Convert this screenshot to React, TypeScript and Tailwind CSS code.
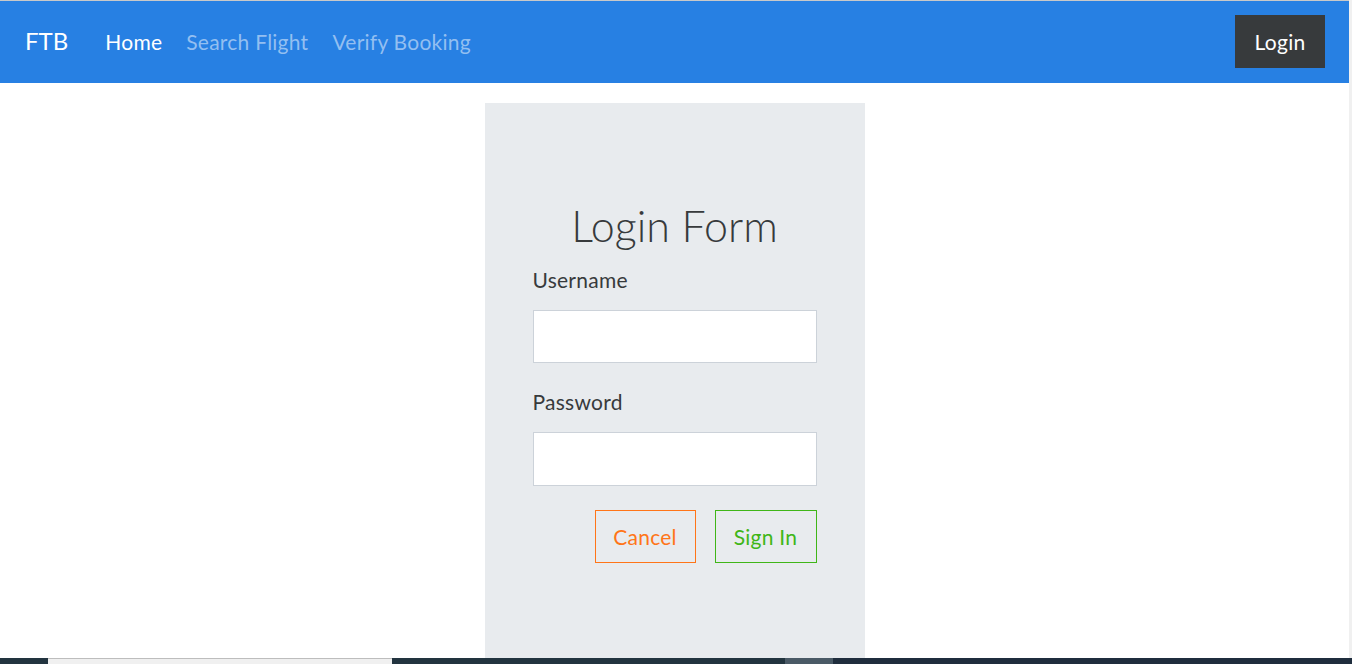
const App = () => {
  return (
    <div className="h-screen w-full flex flex-col bg-white overflow-hidden" style={{ fontFamily: 'Lato, "Open Sans", sans-serif' }}>
      <div className="flex-1 flex min-h-0">
        <div className="flex-1 flex flex-col min-w-0">
          {/* top edge */}
          <div className="h-px bg-[#c9c9c9]"></div>

          {/* Navbar */}
          <nav className="h-[82px] bg-[#2780e3] flex items-center pl-[25px] pr-[24px]">
            <span className="text-white text-[24px] leading-none -mt-[2px]">FTB</span>
            <div className="flex items-center gap-[24px] ml-[37px] text-[21px] tracking-[0.25px] leading-none -mt-[2px]">
              <a className="text-white">Home</a>
              <a className="text-[#93bff1]">Search Flight</a>
              <a className="text-[#93bff1]">Verify Booking</a>
            </div>
            <button className="ml-auto w-[90px] h-[53px] -mt-[2px] bg-[#373a3c] text-white text-[21px] tracking-[0.25px] leading-none">
              Login
            </button>
          </nav>

          {/* Login panel */}
          <div className="flex-1 flex justify-center pt-5 min-h-0">
            <div className="w-[380px] bg-[#e8ebee] px-12 pt-[100px]">
              <h1 className="text-[43px] font-light text-[#373a3c] text-center leading-[46px]">Login Form</h1>
              <label className="block mt-[17px] text-[21px] tracking-[0.25px] text-[#373a3c] leading-[28px]">Username</label>
              <input type="text" className="block mt-[16px] w-full h-[53px] bg-white border border-[#ccd2d9] outline-none" />
              <label className="block mt-[25px] text-[21px] tracking-[0.25px] text-[#373a3c] leading-[28px]">Password</label>
              <input type="password" className="block mt-[16px] w-full h-[54px] bg-white border border-[#ccd2d9] outline-none" />
              <div className="flex justify-end gap-[19px] mt-[24px]">
                <button className="w-[101px] h-[53px] border border-[#ff7518] text-[#ff7518] text-[21px] tracking-[0.25px] leading-none">Cancel</button>
                <button className="w-[102px] h-[53px] border border-[#3fb618] text-[#3fb618] text-[21px] tracking-[0.25px] leading-none">Sign In</button>
              </div>
            </div>
          </div>
        </div>
        <div className="w-[3px] bg-[#f0f0f0]"></div>
      </div>

      {/* taskbar strip */}
      <div className="h-[6px] flex bg-[#22343f]">
        <div className="w-[48px]"></div>
        <div className="w-[344px] bg-[#f0f0f0] border-t border-[#bdbdbd]"></div>
        <div className="w-[393px]"></div>
        <div className="w-[48px] bg-[#4a5a66]"></div>
        <div className="flex-1 bg-[#1f2d3d]"></div>
      </div>
    </div>
  )
}

export default App
